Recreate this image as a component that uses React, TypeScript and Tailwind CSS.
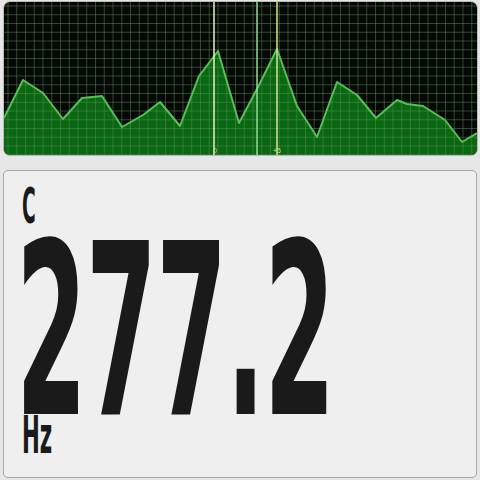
import React from "react";

const pts: [number, number][] = [
  [4, 118], [23, 80], [43, 93], [63, 119], [82, 98], [102, 96], [122, 127],
  [143, 115], [160, 102], [180, 126], [199, 76], [218, 51], [239, 123],
  [258, 87], [277, 49], [297, 106], [317, 137], [337, 82], [357, 95],
  [376, 118], [397, 100], [407, 104], [423, 106], [445, 120], [462, 142], [477, 133],
];

function Spectrum() {
  const line = pts.map((p) => p.join(",")).join(" ");
  const area = `4,155 ${line} 477,155`;
  const vx: number[] = [];
  for (let x = 8; x < 477; x += 8.75) vx.push(x);
  const hy: number[] = [];
  for (let y = 6; y < 155; y += 8.75) hy.push(y);
  return (
    <svg viewBox="4 2 473 153" width="473" height="153" className="block">
      <rect x="4" y="2" width="473" height="153" fill="#050805" />
      <polygon points={area} fill="#0a6812" />
      {vx.map((x) => (
        <line key={"v" + x} x1={x} y1="2" x2={x} y2="155" stroke="#5a8a5a" strokeOpacity="0.5" strokeWidth="1" />
      ))}
      {hy.map((y) => (
        <line key={"h" + y} x1="4" y1={y} x2="477" y2={y} stroke="#5a8a5a" strokeOpacity="0.5" strokeWidth="1" />
      ))}
      <polyline points={line} fill="none" stroke="#55c055" strokeWidth="2" strokeLinejoin="round" />
      <line x1="214" y1="2" x2="214" y2="155" stroke="#e8f0c0" strokeWidth="1.5" />
      <line x1="257" y1="2" x2="257" y2="155" stroke="#8fdc8f" strokeWidth="1.5" />
      <line x1="277" y1="2" x2="277" y2="155" stroke="#d8e890" strokeWidth="1.5" />
      <text x="213" y="153" fontSize="7" fill="#c8d890" fontFamily="Liberation Sans, sans-serif">0</text>
      <text x="273" y="153" fontSize="7" fill="#c8d890" fontFamily="Liberation Sans, sans-serif">+5</text>
    </svg>
  );
}

export default function App() {
  return (
    <div className="w-[480px] h-[480px] bg-[#e6e6e6] flex flex-col px-[3px] pt-[1px] pb-[2px]">
      <div className="rounded-[7px] overflow-hidden border border-[#b8b8b8] w-[475px] h-[155px]">
        <Spectrum />
      </div>
      <div className="mt-[14px] flex-1 rounded-[5px] border border-[#a9a9a9] bg-[#efefef] pl-[18px] pt-[16px] text-[#1a1a1a] font-bold font-['DejaVu_Sans_Condensed','Liberation_Sans',sans-serif]">
        {/* note name */}
        <div className="h-[57px]">
          <div className="text-[26px] leading-[20px] origin-top-left scale-x-[0.8] scale-y-[1.9]">C</div>
        </div>
        {/* frequency */}
        <div className="h-[172px]">
          <div className="text-[147px] leading-[109px] tracking-[-1px] origin-top-left scale-x-[0.77] scale-y-[1.62] -ml-[6px] whitespace-nowrap">277.2</div>
        </div>
        <div>
          <div className="text-[30px] leading-[23px] origin-top-left scale-x-[0.79] scale-y-[1.7]">Hz</div>
        </div>
      </div>
    </div>
  );
}
